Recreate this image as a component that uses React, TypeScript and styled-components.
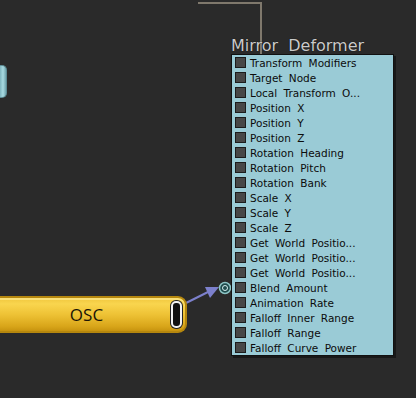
import React from "react";
import styled, { createGlobalStyle } from "styled-components";

const Global = createGlobalStyle`
  html, body { margin: 0; padding: 0; background: #2a2a2a; }
  #root { width: 416px; height: 398px; }
`;

const Canvas = styled.div`
  position: relative;
  width: 416px;
  height: 398px;
  overflow: hidden;
  background: #2a2a2a;
  font-family: "DejaVu Sans", "Liberation Sans", sans-serif;
`;

const Wires = styled.svg`
  position: absolute;
  left: 0;
  top: 0;
  width: 416px;
  height: 398px;
  pointer-events: none;
`;

const DeformerNode = styled.div<{ $x: number; $y: number }>`
  position: absolute;
  left: ${(p) => p.$x}px;
  top: ${(p) => p.$y}px;
  display: flex;
  flex-direction: column;
`;

const Title = styled.div`
  color: #cacaca;
  font-family: "DejaVu Sans", sans-serif;
  font-size: 16px;
  line-height: 17px;
  word-spacing: 5px;
  height: 17px;
  text-shadow: 0 0 1px #000;
`;

const Panel = styled.div`
  width: 161px;
  background: #9acbd6;
  border: 1px solid #111;
  box-shadow: 2px 2px 0 #181818;
  display: flex;
  flex-direction: column;
`;

const Row = styled.div`
  height: 15px;
  display: flex;
  align-items: center;
  gap: 4px;
  padding-left: 3px;
`;

const Box = styled.span`
  width: 9px;
  height: 9px;
  background: #474747;
  border: 1px solid #1c1c1c;
  flex: none;
`;

const Label = styled.span`
  font-family: "DejaVu Sans", sans-serif;
  font-size: 10.5px;
  color: #0c0c0c;
  word-spacing: 3px;
  white-space: nowrap;
`;

const Pill = styled.div<{ $x: number; $y: number; $w: number; $h: number }>`
  position: absolute;
  left: ${(p) => p.$x}px;
  top: ${(p) => p.$y}px;
  width: ${(p) => p.$w}px;
  height: ${(p) => p.$h}px;
  box-sizing: border-box;
`;

const BlueStub = styled(Pill)`
  border-radius: 0 5px 5px 0;
  background: linear-gradient(90deg, #7fb5bf 0%, #a8dbe2 50%, #6fa2ac 100%);
  border: 1px solid #5d8c95;
  border-left: none;
`;

const OscNode = styled(Pill)`
  border-radius: 0 9px 9px 0;
  background: linear-gradient(180deg, #f0c63e 0%, #f9d54e 18%, #eec235 50%, #d9a61a 85%, #c8940f 100%);
  border: 2px solid #b5870e;
  border-left: none;
  display: flex;
  align-items: center;
  justify-content: center;
  box-shadow: inset 0 2px 0 rgba(255, 240, 160, 0.6);
`;

const OscLabel = styled.span`
  font-family: "Open Sans", "DejaVu Sans", sans-serif;
  font-size: 17px;
  color: #1a1406;
  margin-right: 12px;
`;

const OutPort = styled.div`
  position: absolute;
  right: 3px;
  top: 3px;
  width: 11px;
  height: 27px;
  border-radius: 5px;
  background: #111;
  border: 2px solid #f2f2f2;
  box-sizing: border-box;
  box-shadow: 0 0 0 1px #222;
`;

const rows = [
  "Transform Modifiers",
  "Target Node",
  "Local Transform O...",
  "Position X",
  "Position Y",
  "Position Z",
  "Rotation Heading",
  "Rotation Pitch",
  "Rotation Bank",
  "Scale X",
  "Scale Y",
  "Scale Z",
  "Get World Positio...",
  "Get World Positio...",
  "Get World Positio...",
  "Blend Amount",
  "Animation Rate",
  "Falloff Inner Range",
  "Falloff Range",
  "Falloff Curve Power",
];

export default function App() {
  return (
    <>
      <Global />
      <Canvas>
        <Wires viewBox="0 0 416 398">
          <path d="M198 3 L261 3 L261 54" fill="none" stroke="#7f786c" strokeWidth="2" />
          <line x1="186" y1="303" x2="212" y2="290" stroke="#7c80cc" strokeWidth="2" />
          <polygon points="219,287 205,287 210,298" fill="#7c80cc" />
          <circle cx="225" cy="288" r="5.5" fill="#1f4b4c" stroke="#8cc4c4" strokeWidth="1.5" />
          <circle cx="225" cy="288" r="2.5" fill="none" stroke="#d6f0f0" strokeWidth="1" />
        </Wires>
        <BlueStub $x={0} $y={65} $w={7} $h={33} />
        <OscNode $x={0} $y={296} $w={187} $h={37}>
          <OscLabel>OSC</OscLabel>
          <OutPort />
        </OscNode>
        <DeformerNode $x={231} $y={37}>
          <Title>Mirror Deformer</Title>
          <Panel>
            {rows.map((r, i) => (
              <Row key={i}>
                <Box />
                <Label>{r}</Label>
              </Row>
            ))}
          </Panel>
        </DeformerNode>
      </Canvas>
    </>
  );
}
